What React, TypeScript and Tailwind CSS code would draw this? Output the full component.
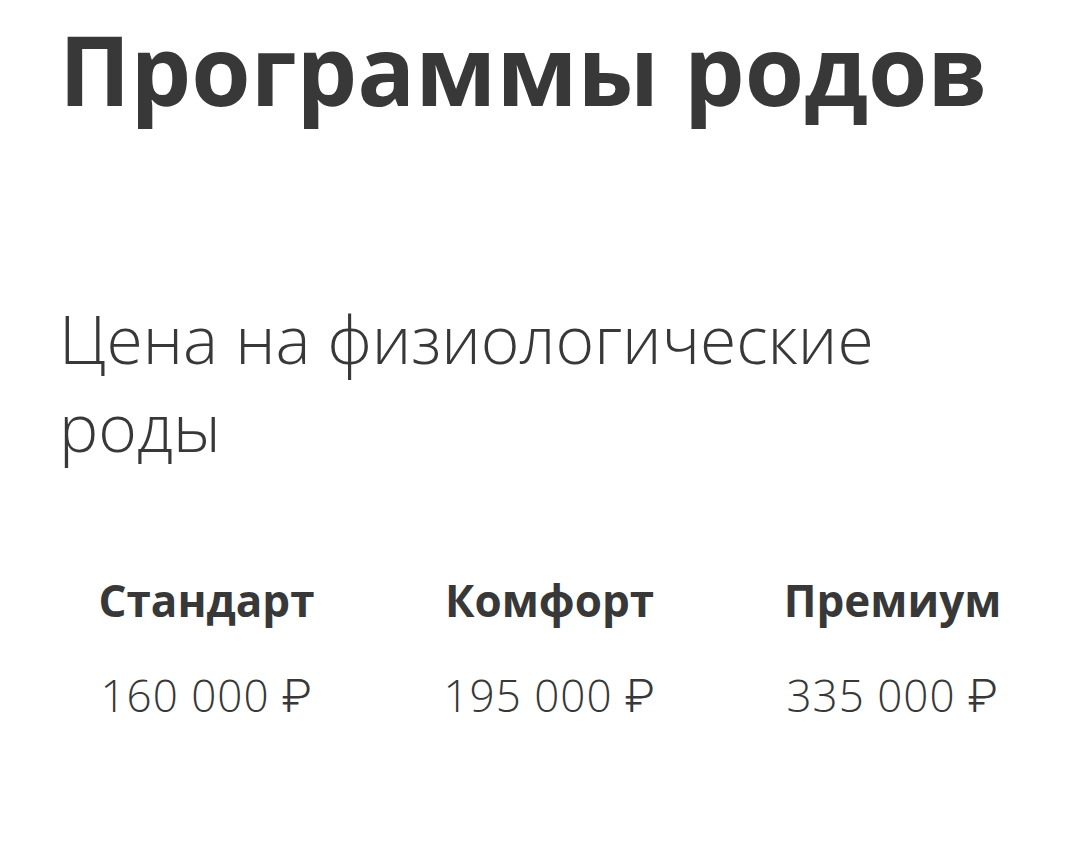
export default function App() {
  const tiers = [
    { name: "Стандарт", price: "160 000" },
    { name: "Комфорт", price: "195 000" },
    { name: "Премиум", price: "335 000" },
  ];
  return (
    <div className="w-[1080px] h-[841px] bg-white text-[#383838] overflow-hidden font-['Open_Sans',sans-serif]">
      <div className="pl-[59px] pt-[9px]">
        <h1 className="text-[96px] leading-[120px] font-bold">Программы родов</h1>
        <p className="mt-[165px] text-[66px] leading-[88px] font-light w-[900px]">
          Цена на физиологические роды
        </p>
      </div>
      <div className="mt-[105px] grid grid-cols-[343px_343px_343px] pl-[35px]">
        {tiers.map((t) => (
          <div key={t.name} className="flex flex-col items-center">
            <div className="text-[44px] leading-[50px] font-bold">{t.name}</div>
            <div className="mt-[45px] text-[44px] leading-[50px] font-light tracking-[1px]">
              {t.price} <span className="font-['Roboto',sans-serif] font-light text-[46px]">₽</span>
            </div>
          </div>
        ))}
      </div>
    </div>
  );
}
